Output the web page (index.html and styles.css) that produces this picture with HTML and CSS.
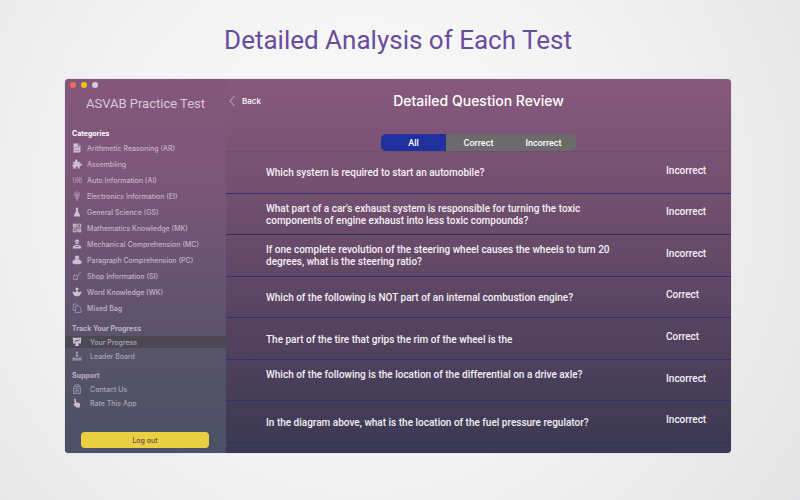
FILE: index.html
```
<!DOCTYPE html>
<html lang="en">
<head>
  <meta charset="UTF-8" />
  <meta name="viewport" content="width=device-width, initial-scale=1" />
  <title>Detailed Analysis of Each Test</title>
  <link rel="stylesheet" href="styles.css">
</head>
<body>

  <h1 class="headline">Detailed Analysis of Each Test</h1>

  <div class="window">
    <aside class="sidebar">
      <div class="dots">
        <span class="dot red"></span>
        <span class="dot yellow"></span>
        <span class="dot grey"></span>
      </div>
      <div class="app-name">ASVAB Practice Test</div>

      <nav class="menu">
        <h2 class="bright">Categories</h2>
        <ul class="categories">
          <li><a href="#ar"><svg class="icon" viewBox="0 0 10 10"><path fill-rule="evenodd" d="M1.500.500h4.500L8.500 3v6.500h-7zM2.800 4.500v.6h1.600v-.6zM5.400 4.500v.6h1.800v-.6zM2.800 7v.6h4.400V7zM5.800 1v2.300H8z"/></svg>Arithmetic Reasoning (AR)</a></li>
          <li><a href="#as"><svg class="icon" viewBox="0 0 10 10"><path d="M3.4 2.8C2.5 1.6 3.2.6 4.3.6s1.8 1 1 2.2h2.5v2c1-.7 2-.2 2 .9s-1 1.6-2 .9v2.9H5.7c.5-1.1 0-1.7-.8-1.7S3.5 8.400 4 9.500H1.200V7.300C.4 7.500.1 7 .2 6.300s.6-1 1.500-.7L.9 2.800z"/></svg>Assembling</a></li>
          <li><a href="#ai"><svg class="icon faint" viewBox="0 0 10 10"><path class="line" d="M.8 2.500l1.400 5.500M3 2.500L4.200 6 6 2M3 8l1.500-1.500M5 8l2.500-6M7.500 4.500v3h1.800V2.500L7 6"/></svg>Auto Information (AI)</a></li>
          <li><a href="#ei"><svg class="icon faint" viewBox="0 0 10 10"><circle class="line" cx="5" cy="3.600" r="2.800"/><path d="M3 2.500h4L5.500 6.500h-1zM3.500 7h3v1h-3zM4 8.500h2v1H4z"/></svg>Electronics Information (EI)</a></li>
          <li><a href="#gs"><svg class="icon" viewBox="0 0 10 10"><path d="M3.700.7h2.600v1H6v2.400l2 4.200v1.200H2V8.300l2-4.200V1.700h-.3z"/></svg>General Science (GS)</a></li>
          <li><a href="#mk"><svg class="icon" viewBox="0 0 10 10"><path fill-rule="evenodd" d="M.8.8h3.800v3.800H.8zM5.400.8h3.800v3.800H5.400zM.8 5.400h3.800v3.800H.8zM5.400 5.400h3.800v3.800H5.400zM1.500 2.400v.7h2.400v-.7zM6.500 1.600v2.200h1.600V1.600zM1.700 6.300v2h2v-2zM6.200 6.400v.6h2.300v-.6zM6.200 7.700v.6h2.300v-.6z"/></svg>Mathematics Knowledge (MK)</a></li>
          <li><a href="#mc"><svg class="icon" viewBox="0 0 10 10"><path d="M3 2.200C3 1 3.800.4 5 .4s2 .6 2 1.800h.5v.6h-5v-.6zM3.300 3.300h3.400c0 1.300-.7 2-1.700 2s-1.700-.7-1.700-2zM1 9.500V8c0-1.500 1.500-2 4-2s4 .5 4 2v1.500zM3 7.300v.7h4v-.7z" fill-rule="evenodd"/></svg>Mechanical Comprehension (MC)</a></li>
          <li><a href="#pc"><svg class="icon" viewBox="0 0 10 10"><circle cx="5" cy="2.500" r="2"/><path d="M3 4.200h4L8.500 5.500c1.200.3 1.400 1.500 1 2.400-.9 1.700-8.100 1.700-9 0-.4-.9-.2-2.100 1-2.400z"/></svg>Paragraph Comprehension (PC)</a></li>
          <li><a href="#si"><svg class="icon faint" viewBox="0 0 10 10"><path class="line" d="M6 4l3-3M6.500 1.500L8.500 3.500M1.500 4.500h4v4h-4zM2.500 4.500v-1.500M4 9L6.500 4.500"/></svg>Shop Information (SI)</a></li>
          <li><a href="#wk"><svg class="icon" viewBox="0 0 10 10"><circle cx="5" cy="2" r="1.500"/><path d="M.8 4.500L4 5.200V3.800h2v1.400l3.200-.7c.3 2.500-1.500 4.800-4.200 4.800S.5 7 .8 4.500z"/></svg>Word Knowledge (WK)</a></li>
          <li><a href="#mb"><svg class="icon faint" viewBox="0 0 10 10"><path class="line" d="M3.500 3h3.300L9 5.200v4.300H3.500zM3.500 7.500H1.200V1h3.600l1.500 2"/></svg>Mixed Bag</a></li>
        </ul>

        <h2>Track Your Progress</h2>
        <ul class="pages">
          <li><a class="active" href="#progress"><svg class="icon" viewBox="0 0 10 10"><path fill-rule="evenodd" d="M.5.800h9v1H9v4.700H6.200L7 9H3l.8-2.500H1V1.800H.5zM2.200 4.500l.5.600 1.800-1.200 1 .7L8 2.800l-.5-.6-2 1.400-1-.7z"/></svg>Your Progress</a></li>
          <li><a href="#leaders"><svg class="icon faint" viewBox="0 0 10 10"><circle cx="5" cy="1.600" r="1.200"/><path d="M3.700 3.200h2.600V6H3.700zM.5 6.500h2.800v3H.5zM3.700 7h2.600v2.500H3.700zM6.700 6.500h2.800v3H6.700z"/></svg>Leader Board</a></li>
        </ul>

        <h2>Support</h2>
        <ul class="pages">
          <li><a href="#contact"><svg class="icon faint" viewBox="0 0 10 10"><path class="line" d="M1.500 4L3 .8h4L8.500 4v5.500h-7zM3 2.500h4M1.500 4.200h7M3.200 9V6.500h3.600V9"/><circle cx="5" cy="6.500" r="1"/></svg>Contact Us</a></li>
          <li><a href="#rate"><svg class="icon" viewBox="0 0 10 10"><path d="M2.200 1.200c0-.9 1.500-.9 1.600 0l.4 3 3 .8c.9.300 1 .8.900 1.600L7.600 9.500H4.300L1.500 6.600c-.5-.7.4-1.200 1.200-.6z"/></svg>Rate This App</a></li>
        </ul>
      </nav>

      <button class="logout" type="button">Log out</button>
    </aside>

    <main class="review">
      <header class="review-head">
        <button class="back" type="button">
          <svg viewBox="0 0 6 12"><path d="M5.500 1L1 6l4.500 5"/></svg>
          Back
        </button>
        <h2>Detailed Question Review</h2>
      </header>

      <div class="filter" role="group" aria-label="Filter questions">
        <button class="selected" type="button" aria-pressed="true">All</button>
        <button type="button" aria-pressed="false">Correct</button>
        <button type="button" aria-pressed="false">Incorrect</button>
      </div>

      <table class="questions">
        <tbody>
          <tr><td>Which system is required to start an automobile?</td><td class="result">Incorrect</td></tr>
          <tr><td>What part of a car's exhaust system is responsible for turning the toxic components of engine exhaust into less toxic compounds?</td><td class="result">Incorrect</td></tr>
          <tr><td>If one complete revolution of the steering wheel causes the wheels to turn 20 degrees, what is the steering ratio?</td><td class="result">Incorrect</td></tr>
          <tr><td>Which of the following is NOT part of an internal combustion engine?</td><td class="result">Correct</td></tr>
          <tr><td>The part of the tire that grips the rim of the wheel is the</td><td class="result">Correct</td></tr>
          <tr><td>Which of the following is the location of the differential on a drive axle?<br>&nbsp;</td><td class="result">Incorrect</td></tr>
          <tr><td>In the diagram above, what is the location of the fuel pressure regulator?</td><td class="result">Incorrect</td></tr>
        </tbody>
      </table>
    </main>
  </div>

</body>
</html>
```
FILE: styles.css
```
:root {
  --purple: #6a4c9c;
  --line: #2e3170;
  --blue: #20309c;
  --yellow: #e9cf42;
}

* {
  box-sizing: border-box;
}

body {
  margin: 0;
  min-height: 100vh;
  padding: 24px 69px 47px 65px;
  display: flex;
  flex-direction: column;
  background: radial-gradient(circle at 45% 40%, #fafafa 0%, #f3f3f4 50%, #e4e4e6 100%);
  font-family: Inter, "Liberation Sans", sans-serif;
}

h1, h2, ul {
  margin: 0;
  padding: 0;
}

ul {
  list-style: none;
}

button {
  border: none;
  padding: 0;
  background: none;
  font-family: inherit;
  color: #fff;
  cursor: pointer;
}

.headline {
  height: 55px;
  color: var(--purple);
  font-family: Roboto, sans-serif;
  font-size: 26px;
  font-weight: 400;
  line-height: 32px;
  text-align: center;
}

.window {
  flex: 1;
  display: flex;
  border-radius: 4px;
  overflow: hidden;
  background: linear-gradient(#87597c 0%, #714f6e 33%, #574461 63%, #3a3952 100%);
  box-shadow: 0 0 1px #8d8494;
}

/* sidebar */
.sidebar {
  flex: 0 0 161px;
  display: flex;
  flex-direction: column;
  background: linear-gradient(#83577a 0%, #7d567a 25%, #665373 55%, #565368 75%, #4c5166 100%);
}

.dots {
  display: flex;
  gap: 5px;
  padding: 3px 5px;
}

.dot {
  width: 6px;
  height: 6px;
  border-radius: 50%;
}

.red { background: #ee6a5b; }
.yellow { background: #f5bf10; }
.grey { background: #d3cdd6; }

.app-name {
  padding-top: 5px;
  color: #d9c9d8;
  font-family: Roboto, sans-serif;
  font-size: 13px;
  line-height: 16px;
  text-align: center;
}

.menu {
  flex: 1;
  padding-top: 16px;
}

.menu h2 {
  padding-left: 7px;
  color: #bfb3c4;
  font-size: 7px;
  font-weight: 700;
  line-height: 12px;
}

.menu .bright {
  color: #fff;
}

.menu ul {
  margin-bottom: 7px;
}

.menu a {
  display: flex;
  align-items: center;
  gap: 5px;
  height: 14px;
  padding-left: 7px;
  color: #c3b3c7;
  font-size: 7px;
  font-weight: 500;
  text-decoration: none;
}

.categories a {
  height: 16px;
}

.pages a {
  gap: 8px;
  color: #aaa6b5;
}

.pages .active {
  height: 12px;
  margin: 1px 0;
  background: #4b4852;
}

.icon {
  width: 10px;
  height: 10px;
  fill: #cdbfd0;
}

.faint {
  opacity: 0.6;
}

.line {
  fill: none;
  stroke: #cdbfd0;
  stroke-width: 0.8;
}

.logout {
  height: 16px;
  margin: 0 17px 5px 16px;
  border-radius: 4px;
  background: var(--yellow);
  color: #5c5340;
  font-size: 7px;
  font-weight: 500;
}

/* question list */
.review {
  flex: 1;
  display: flex;
  flex-direction: column;
  padding-bottom: 10px;
}

.review-head {
  display: grid;
  grid-template-columns: 1fr auto 1fr;
  align-items: center;
  height: 43px;
  margin-bottom: 12px;
}

.review-head h2 {
  color: #fff;
  font-size: 14px;
  font-weight: 500;
}

.back {
  display: flex;
  align-items: center;
  gap: 7px;
  padding-left: 3px;
  font-size: 8px;
  font-weight: 500;
}

.back svg {
  width: 6px;
  height: 12px;
  fill: none;
  stroke: #c9b3c6;
}

.filter {
  display: flex;
  align-self: center;
  border-radius: 5px;
  overflow: hidden;
  background: #6c6b6c;
}

.filter button {
  width: 65px;
  height: 17px;
  font-family: Roboto, sans-serif;
  font-size: 9px;
  font-weight: 500;
}

.filter .selected {
  background: var(--blue);
}

.questions {
  flex: 1;
  border-collapse: separate;
  border-spacing: 0;
  border-top: 1px solid #6f4c70;
  color: #f6f0f6;
  font-family: Roboto, sans-serif;
  font-size: 10px;
  font-weight: 500;
  line-height: 12px;
}

.questions td {
  height: 32px;
  padding: 2px 0 0 40px;
  border-bottom: 1px solid var(--line);
}

.questions .result {
  width: 105px;
  padding: 0 0 3px 40px;
}
```
